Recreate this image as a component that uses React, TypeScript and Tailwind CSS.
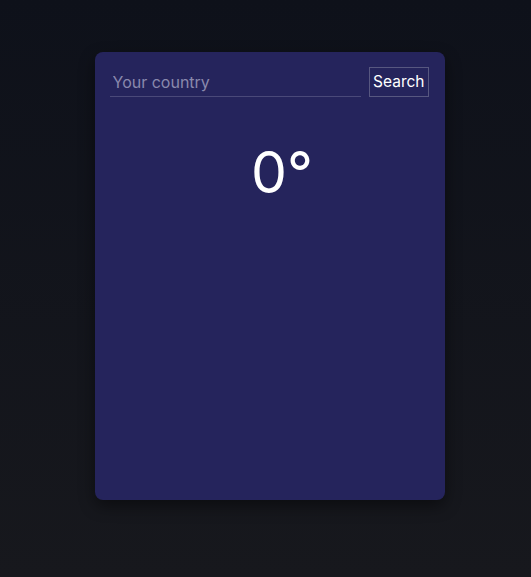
import React, { useState } from 'react';

export default function App() {
  const [country, setCountry] = useState('');

  return (
    <div
      className="min-h-screen w-full bg-gradient-to-b from-[#0e111a] to-[#17181d] pt-[52px] pl-[8px]"
      style={{ fontFamily: 'Inter, "Noto Sans", sans-serif' }}
    >
      <div className="mx-auto flex h-[448px] w-[350px] flex-col rounded-lg bg-[#25245c] pl-[15px] pr-[16px] pt-[15px] shadow-[0_6px_16px_rgba(0,0,0,0.45)]">
        <div className="flex items-end gap-2">
          <input
            value={country}
            onChange={(e) => setCountry(e.target.value)}
            placeholder="Your country"
            className="h-[30px] min-w-0 flex-1 border-b border-[#4a4979] bg-transparent px-[3px] text-base text-white outline-none placeholder:text-[#8a89ad]"
          />
          <button className="h-[30px] shrink-0 border border-[#575780] px-[3px] text-[15.5px] text-white">
            Search
          </button>
        </div>
        <div className="mt-[47px] flex justify-center">
          <div className="relative text-[57px] leading-none font-normal text-white">
            0<span className="absolute left-full top-0">°</span>
          </div>
        </div>
      </div>
    </div>
  );
}
